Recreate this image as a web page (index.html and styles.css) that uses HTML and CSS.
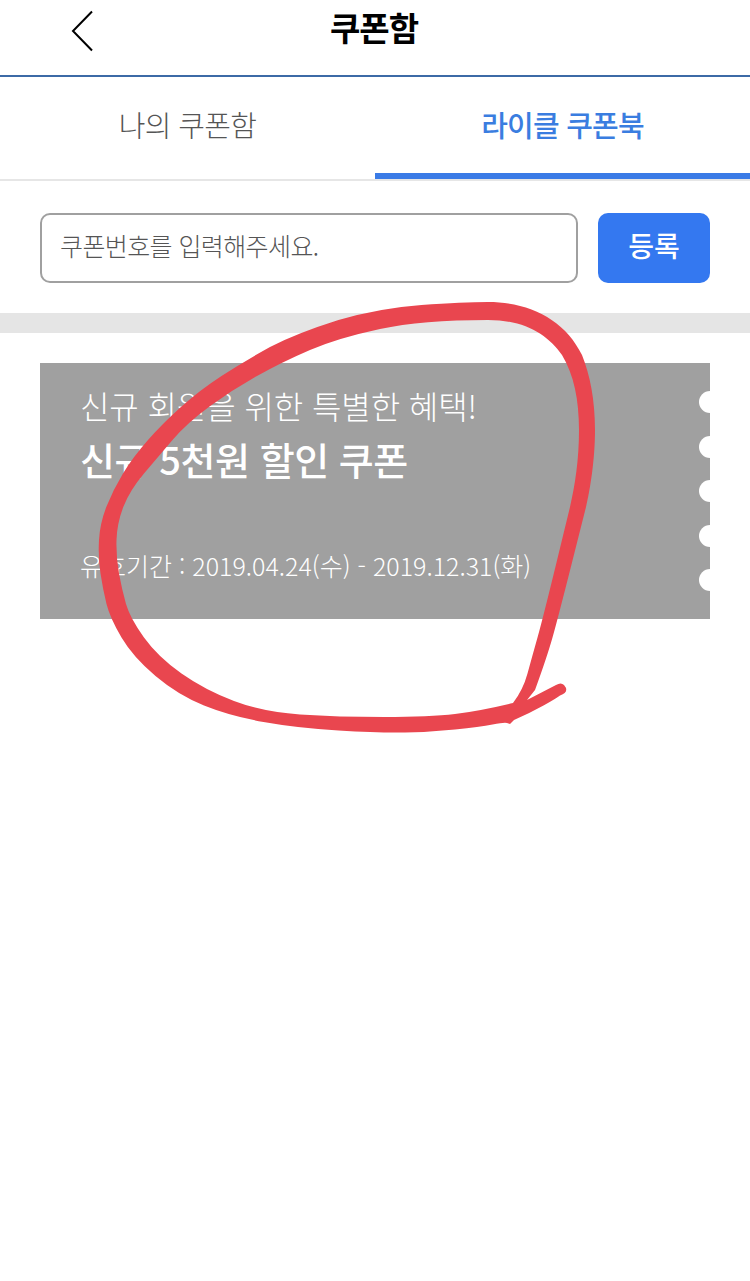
FILE: index.html
```html
<!DOCTYPE html>
<html lang="ko">
<head>
<meta charset="utf-8">
<title>쿠폰함</title>
<link rel="stylesheet" href="styles.css">
</head>
<body>
<div class="page">
  <header class="header">
    <svg class="back" width="22" height="42" viewBox="0 0 22 42"><path d="M21 1.5 2 21l19 19.5" fill="none" stroke="#000" stroke-width="2"/></svg>
    <h1 class="title">쿠폰함</h1>
  </header>
  <nav class="tabs">
    <div class="tab">나의 쿠폰함</div>
    <div class="tab active">라이클 쿠폰북</div>
  </nav>
  <section class="register">
    <div class="input">쿠폰번호를 입력해주세요.</div>
    <button class="btn">등록</button>
  </section>
  <div class="band"></div>
  <section class="list">
    <article class="ticket">
      <p class="sub">신규 회원을 위한 특별한 혜택!</p>
      <p class="name">신규 5천원 할인 쿠폰</p>
      <p class="date">유효기간 : 2019.04.24(수) - 2019.12.31(화)</p>
      <div class="notches"><i></i><i></i><i></i><i></i><i></i></div>
    </article>
  </section>
  <svg class="scribble" width="750" height="1281" viewBox="0 0 750 1281">
    <path fill="#e9464f" fill-rule="evenodd" d="M527 700L535 690Q547 657 552.5 637.5Q558 618 572 562.5L586 507C590 490 595 460 595 430C595 400 590 375 582 355C565 320 530 302 488 302Q463 302 421.5 305Q380 308 338.5 320Q297 333 270 347Q243 362 221.5 376Q200 390 181.5 406.5Q163 423 148 440Q133 457 123 473.5Q113 490 106.5 506.5Q100 523 99 540Q98 557 100.5 573.5Q103 590 106.5 604Q110 618 121.5 637.5Q133 657 155.5 676Q178 695 204 705.5Q230 716 263.5 722Q297 728 338.5 730.5Q380 733 405 732.5Q430 732 455 729.5Q480 727 492.5 724.5Q505 722 507 723L510 724L514 720Q530 713 543.5 705.5Q557 698 560 695.5Q570 692 564 685Q561 682 556 685Z M513 703Q480 711 455 714Q430 717 384 717Q338 717 300 714.5Q263 712 234 701Q205 690 181.5 673.5Q158 657 144 637.5Q130 618 126 604Q122 590 119 573.5Q116 557 116.5 540Q117 523 123.5 506.5Q130 490 144 473.5Q158 457 172.5 440Q187 423 209.5 406.5Q232 390 257 376Q282 362 310 350Q338 338 380 329Q422 320 488 320C525 320 548 335 562 355C574 375 579 400 579 430C579 460 575 485 570 507L556.5 562.5Q543 618 537.5 637.5Q532 657 527.5 673.5Q523 690 513 703Z"/>
  </svg>
</div>
</body>
</html>
```
FILE: styles.css
```css
* { box-sizing: border-box; }
html, body { margin: 0; padding: 0; background: #fff; }
body { font-family: "Noto Sans CJK KR", "Noto Sans", sans-serif; }
.page { position: relative; width: 750px; height: 1281px; overflow: hidden; }
.header { height: 77px; border-bottom: 2px solid #3c6aa6; display: flex; align-items: center; justify-content: center; position: relative; padding-bottom: 21px; padding-right: 2px; }
.back { position: absolute; left: 71px; top: 10px; }
.title { margin: 0; font-size: 33px; font-weight: 700; color: #000; letter-spacing: -1px; line-height: 46px; }
.tabs { display: flex; height: 104px; border-bottom: 2px solid #e6e6e6; }
.tab { flex: 1; height: 102px; display: flex; align-items: center; justify-content: center; padding-bottom: 8px; font-size: 29px; font-weight: 300; color: #555; letter-spacing: -0.7px; }
.tab.active { color: #3a7de0; font-weight: 500; border-bottom: 6px solid #3a7be6; height: 102px; padding-bottom: 2px; letter-spacing: -0.8px; }
.register { display: flex; gap: 20px; padding: 32px 40px 30px; }
.input { flex: 1; height: 70px; border: 2px solid #a0a0a0; border-radius: 10px; padding: 0 18px 6px; display: flex; align-items: center; font-size: 25px; font-weight: 300; color: #555; letter-spacing: -0.6px; }
.btn { width: 112px; height: 70px; border: 0; border-radius: 10px; background: #3478f0; color: #fff; font: 500 28px "Noto Sans CJK KR", sans-serif; padding: 0 0 6px; }
.band { height: 20px; background: #e5e5e5; }
.list { padding: 30px 40px; }
.ticket { position: relative; height: 256px; background: #a0a0a0; overflow: hidden; padding: 19px 40px 0; color: #fff; }
.ticket p { margin: 0; }
.sub { font-size: 32px; font-weight: 300; line-height: 46px; letter-spacing: -0.1px; }
.name { font-size: 38px; font-weight: 500; line-height: 52px; margin-top: 5px !important; letter-spacing: -0.45px; }
.date { font-size: 25px; font-weight: 300; line-height: 36px; margin-top: 62px !important; }
.notches { position: absolute; left: 659px; top: 28px; display: flex; flex-direction: column; gap: 22.5px; }
.notches i { display: block; width: 22px; height: 22px; border-radius: 50%; background: #fff; }
.scribble { position: absolute; left: 0; top: 0; pointer-events: none; }
```
